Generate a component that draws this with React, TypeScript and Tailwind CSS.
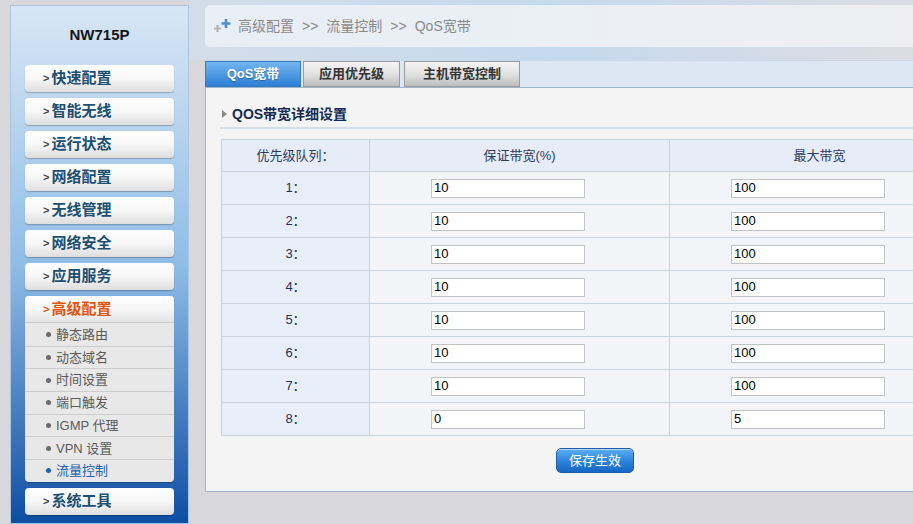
import React from "react"

const font = { fontFamily: '"Liberation Sans", "Noto Sans CJK SC", sans-serif' }

const menus = ["快速配置", "智能无线", "运行状态", "网络配置", "无线管理", "网络安全", "应用服务"]

const subMenus = ["静态路由", "动态域名", "时间设置", "端口触发", "IGMP 代理", "VPN 设置", "流量控制"]

const rows = [
  { n: "1", min: "10", max: "100" },
  { n: "2", min: "10", max: "100" },
  { n: "3", min: "10", max: "100" },
  { n: "4", min: "10", max: "100" },
  { n: "5", min: "10", max: "100" },
  { n: "6", min: "10", max: "100" },
  { n: "7", min: "10", max: "100" },
  { n: "8", min: "0", max: "5" },
]

function MenuItem({ label }: { label: string }) {
  return (
    <div className="flex h-[27px] items-center rounded-[4px] bg-gradient-to-b from-white via-[#f7f7f7] to-[#dedede] pl-[18px] shadow-[0_1px_1px_rgba(0,0,0,0.25)]">
      <span className="mr-[2px] text-[11px] font-bold text-[#444]">&gt;</span>
      <span className="text-[15px] font-bold text-[#1c4f72]">{label}</span>
    </div>
  )
}

function PlusIcon() {
  return (
    <svg width="20" height="14" viewBox="0 0 20 14" className="mr-[5px]">
      <path d="M1 9.5h7M4.5 6v7" stroke="#b4b4b4" strokeWidth="2.2" />
      <path d="M8.5 4.5h9M13 0v9" stroke="#4d8fc8" strokeWidth="2.6" />
    </svg>
  )
}

export default function App() {
  return (
    <div className="flex h-[524px] w-[913px] overflow-hidden bg-[#d7d7dc]" style={font}>
      {/* sidebar */}
      <aside className="ml-[10px] mt-[5px] flex w-[179px] shrink-0 flex-col border border-[#a9c5e2] bg-gradient-to-b from-[#d8e6f5] via-[#8fbde6] to-[#0b4ea2] px-[14px] pt-[17px]">
        <div className="mb-[18px] flex h-[24px] items-center justify-center text-[15px] font-bold text-[#141414]">
          NW715P
        </div>
        <div className="flex flex-col gap-[6px]">
          {menus.map((m) => (
            <MenuItem key={m} label={m} />
          ))}
          <div className="overflow-hidden rounded-[4px] bg-[#e8e8e8] shadow-[0_1px_1px_rgba(0,0,0,0.25)]">
            <div className="flex h-[27px] items-center border-b border-[#c9c9c9] bg-gradient-to-b from-white via-[#f7f7f7] to-[#e4e4e4] pl-[18px]">
              <span className="mr-[2px] text-[11px] font-bold text-[#e0560f]">&gt;</span>
              <span className="text-[15px] font-bold text-[#e0560f]">高级配置</span>
            </div>
            {subMenus.map((s, i) => {
              const active = i === subMenus.length - 1
              return (
                <div
                  key={s}
                  className={`flex h-[22.7px] items-center pl-[21px] text-[13px] ${
                    i > 0 ? "border-t border-[#cdcdcd]" : ""
                  } ${active ? "text-[#1e63ad]" : "text-[#5a5a5a]"}`}
                >
                  <span
                    className={`mr-[5px] inline-block h-[5px] w-[5px] rounded-full ${
                      active ? "bg-[#1e63ad]" : "bg-[#6a6a6a]"
                    }`}
                  />
                  {s}
                </div>
              )
            })}
          </div>
          <MenuItem label="系统工具" />
        </div>
      </aside>

      {/* main */}
      <main className="flex min-w-0 flex-1 flex-col">
        <div className="bg-gradient-to-r from-[#d3dde9] via-[#c5d9ee] to-[#dcdde3] pl-[16px] pt-[5px]">
          <div className="flex h-[42px] items-center rounded-l-[5px] bg-gradient-to-r from-[#e8eef6] via-[#ebeff6] to-[#efeff2] pl-[8px] text-[14px] text-[#8a8a8a]">
            <PlusIcon />
            <span>高级配置</span>
            <span className="mx-[8px]">&gt;&gt;</span>
            <span>流量控制</span>
            <span className="mx-[8px]">&gt;&gt;</span>
            <span>QoS宽带</span>
          </div>
          <div className="h-[13px]" />
        </div>

        <div className="ml-[16px] flex h-[27px] items-end gap-[2px] border-t border-[#c9d7e8] bg-[#dde7f3]">
          <div className="flex h-[26px] w-[96px] items-center justify-center border border-[#3b79bd] bg-gradient-to-b from-[#72b6f0] to-[#2c7fd4] text-[13px] font-bold text-white [text-shadow:0_1px_1px_rgba(0,0,0,0.3)]">
            QoS宽带
          </div>
          <div className="flex h-[26px] w-[97px] items-center justify-center border border-[#9c9c9c] bg-gradient-to-b from-[#f3f3f3] via-[#e2e2e2] to-[#bdbdbd] text-[13px] font-bold text-[#333]">
            应用优先级
          </div>
          <div className="ml-[2px] flex h-[26px] w-[116px] items-center justify-center border border-[#9c9c9c] bg-gradient-to-b from-[#f3f3f3] via-[#e2e2e2] to-[#bdbdbd] text-[13px] font-bold text-[#333]">
            主机带宽控制
          </div>
        </div>

        <section className="ml-[16px] w-[760px] border border-[#9db4cd] bg-[#f4f4f4] pb-[18px] pl-[15px] pt-[16px]">
          <div className="flex h-[20px] items-center pl-[1px]">
            <svg width="5" height="8" viewBox="0 0 5 8" className="mr-[5px]">
              <path d="M0 0l5 4-5 4z" fill="#8a8a8a" />
            </svg>
            <span className="text-[14px] font-bold text-[#162a52]">QOS带宽详细设置</span>
          </div>
          <div className="mb-[10px] ml-[-1px] mt-[3px] h-[2px] bg-[#d6dce3]" />

          <div className="w-[748px]">
            <table className="w-[748px] table-fixed border-collapse text-[13px]">
              <colgroup>
                <col className="w-[148px]" />
                <col className="w-[300px]" />
                <col className="w-[300px]" />
              </colgroup>
              <thead>
                <tr className="h-[32px] bg-[#e6edf8] text-[#2d3b5f]">
                  <th className="border border-[#c9d2df] font-normal">优先级队列：</th>
                  <th className="border border-[#c9d2df] font-normal">保证带宽(%)</th>
                  <th className="border border-[#c9d2df] font-normal">最大带宽</th>
                </tr>
              </thead>
              <tbody>
                {rows.map((r) => (
                  <tr key={r.n} className="h-[33px]">
                    <td className="border border-[#c9d2df] bg-[#e8eef8] text-center text-[#1f3157]">
                      {r.n}：
                    </td>
                    <td className="border border-[#c9d2df] bg-[#f3f4f7] pl-[61px]">
                      <input
                        readOnly
                        value={r.min}
                        className="block h-[19px] w-[154px] border border-[#c3c3c3] bg-white px-[2px] text-[13px] text-black outline-none"
                      />
                    </td>
                    <td className="border border-[#c9d2df] bg-[#f3f4f7] pl-[61px]">
                      <input
                        readOnly
                        value={r.max}
                        className="block h-[19px] w-[154px] border border-[#c3c3c3] bg-white px-[2px] text-[13px] text-black outline-none"
                      />
                    </td>
                  </tr>
                ))}
              </tbody>
            </table>
            <div className="mt-[12px] flex justify-center">
              <button className="h-[25px] w-[78px] rounded-[5px] border border-[#1c5ea6] bg-gradient-to-b from-[#5eaef0] via-[#2f86dc] to-[#1566c4] text-[13px] text-white shadow-[inset_0_1px_0_rgba(255,255,255,0.5)]">
                保存生效
              </button>
            </div>
          </div>
        </section>
      </main>
    </div>
  )
}
